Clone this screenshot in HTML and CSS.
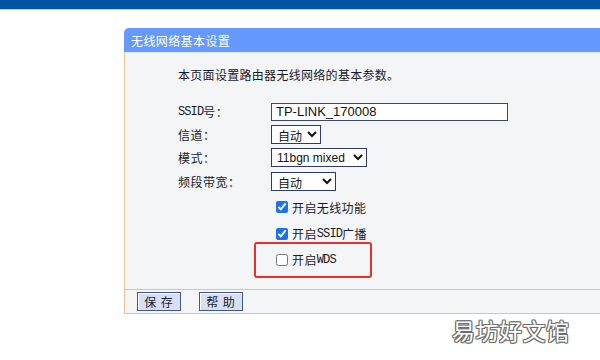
FILE: index.html
```html
<!DOCTYPE html>
<html lang="zh-CN">
<head>
    <meta charset="UTF-8">
    <meta name="viewport" content="width=device-width, initial-scale=1.0">
    <title>无线网络基本设置</title>
    <link rel="stylesheet" href="styles.css">
</head>
<body>
    <div class="page">
        <div class="topbar"></div>

        <div class="panel">
            <div class="panel-title">无线网络基本设置</div>
            <div class="panel-body">
                <p class="intro">本页面设置路由器无线网络的基本参数。</p>

                <div class="form">
                    <label class="lbl" for="ssid"><span class="mono">SSID</span>号：</label>
                    <div class="ctl"><input type="text" id="ssid" class="txt" value="TP-LINK_170008"></div>

                    <label class="lbl" for="channel">信道：</label>
                    <div class="ctl">
                        <select id="channel" class="sel sel-channel">
                            <option>自动</option>
                        </select>
                    </div>

                    <label class="lbl" for="mode">模式：</label>
                    <div class="ctl">
                        <select id="mode" class="sel sel-mode">
                            <option>11bgn mixed</option>
                        </select>
                    </div>

                    <label class="lbl" for="width">频段带宽：</label>
                    <div class="ctl">
                        <select id="width" class="sel sel-width">
                            <option>自动</option>
                        </select>
                    </div>

                    <div></div>
                    <div class="ctl"><label class="chk"><input type="checkbox" checked>开启无线功能</label></div>

                    <div></div>
                    <div class="ctl"><label class="chk"><input type="checkbox" checked>开启<span class="mono">SSID</span>广播</label></div>

                    <div></div>
                    <div class="ctl wds">
                        <label class="chk"><input type="checkbox">开启<span class="mono">WDS</span></label>
                        <span class="mark"></span> <!-- recuadro rojo -->
                    </div>
                </div>
            </div>
            <div class="panel-foot">
                <button class="btn">保 存</button>
                <button class="btn">帮 助</button>
            </div>
        </div>

        <div class="watermark">易坊好文馆</div>
    </div>
</body>
</html>
```

FILE: styles.css
```css
body {
    margin: 0;
    background-color: #ffffff;
    font-family: "Noto Sans CJK SC", "Liberation Sans", sans-serif;
    color: #1a1a2a;
}

.page {
    position: relative;
    width: 600px;
    height: 360px;
    overflow: hidden;
}

.topbar {
    height: 9px;
    background-color: #0052a2;
    border-bottom: 1px solid #b9d2ea;
}

.panel {
    margin: 18px 0 0 124px;
    width: 500px;
}

.panel-title {
    height: 25px;
    line-height: 25px;
    padding-left: 7px;
    background-color: #6699ff;
    border-top-left-radius: 5px;
    border-bottom: 1px solid #dfe8fb;
    box-sizing: border-box;
    color: #ffffff;
    font-size: 12px;
    letter-spacing: 0.4px;
}

.panel-body {
    background-color: #f4f5f7;
    border-left: 1px solid #f0c08c;
    padding: 13px 0 16px 53px;
}

.intro {
    margin: 0 0 16px 0;
    font-size: 12px;
    line-height: 18px;
    letter-spacing: 0.3px;
}

.mono {
    font-family: "Liberation Mono", monospace;
    font-size: 12px;
    letter-spacing: -0.9px;
}

.form {
    display: grid;
    grid-template-columns: 93px 260px;
    grid-template-rows: 23px 23px 23px 24px 28px 25px 27px;
}

.lbl {
    display: flex;
    align-items: center;
    font-size: 12px;
    letter-spacing: 0.5px;
}

.ctl {
    display: flex;
    align-items: center;
}

.txt {
    width: 237px;
    height: 18px;
    box-sizing: border-box;
    border: 1px solid #3b4775;
    padding: 0 4px;
    background-color: #ffffff;
    font-family: "Liberation Sans", sans-serif;
    font-size: 13px;
    color: #111;
    outline: none;
}

.sel {
    height: 19px;
    box-sizing: border-box;
    border: 1px solid #2e3a6c;
    border-radius: 0;
    background-color: #ffffff;
    padding: 0 0 0 2px;
    font-family: "Noto Sans CJK SC", "Liberation Sans", sans-serif;
    font-size: 12px;
    color: #111;
}

.sel-channel { width: 50px; }
.sel-mode { width: 96px; font-family: "Liberation Sans", sans-serif; font-size: 12px; padding-left: 1px; }
.sel-width { width: 65px; }

.chk {
    display: flex;
    align-items: center;
    font-size: 12px;
    letter-spacing: 0.4px;
}

.chk input {
    width: 12px;
    height: 12px;
    margin: 0 4px 0 5px;
    accent-color: #1a73e8;
}

.wds {
    position: relative;
}

.mark {
    position: absolute;
    left: -17px;
    top: -4px;
    width: 118px;
    height: 36px;
    box-sizing: border-box;
    border: 2px solid #e5302b;
    border-radius: 3px;
}

.panel-foot {
    height: 25px;
    box-sizing: border-box;
    background-color: #f4f5f7;
    border-top: 1px solid #f0c08c;
    border-bottom: 1px solid #f0c08c;
    border-left: 1px solid #f0c08c;
    padding: 2px 0 0 12px;
    display: flex;
    gap: 18px;
    align-items: flex-start;
}

.btn {
    width: 44px;
    height: 19px;
    padding: 0;
    box-sizing: border-box;
    background-color: #d8def3;
    border: 1px solid #44548f;
    box-shadow: inset 1px 1px 0 #ffffff;
    font-family: "Noto Sans CJK SC", sans-serif;
    font-size: 12px;
    line-height: 17px;
    letter-spacing: 1px;
    color: #222;
}

.watermark {
    position: absolute;
    left: 452px;
    top: 313px;
    font-family: "Noto Sans CJK SC", sans-serif;
    font-size: 23px;
    letter-spacing: 0.5px;
    color: #ffffff;
    text-shadow: 1px 0 0 #6e6e6e, -1px 0 0 #6e6e6e, 0 1px 0 #6e6e6e, 0 -1px 0 #6e6e6e,
                 1px 1px 0 #6e6e6e, -1px -1px 0 #6e6e6e, 1px -1px 0 #6e6e6e, -1px 1px 0 #6e6e6e;
}
```
